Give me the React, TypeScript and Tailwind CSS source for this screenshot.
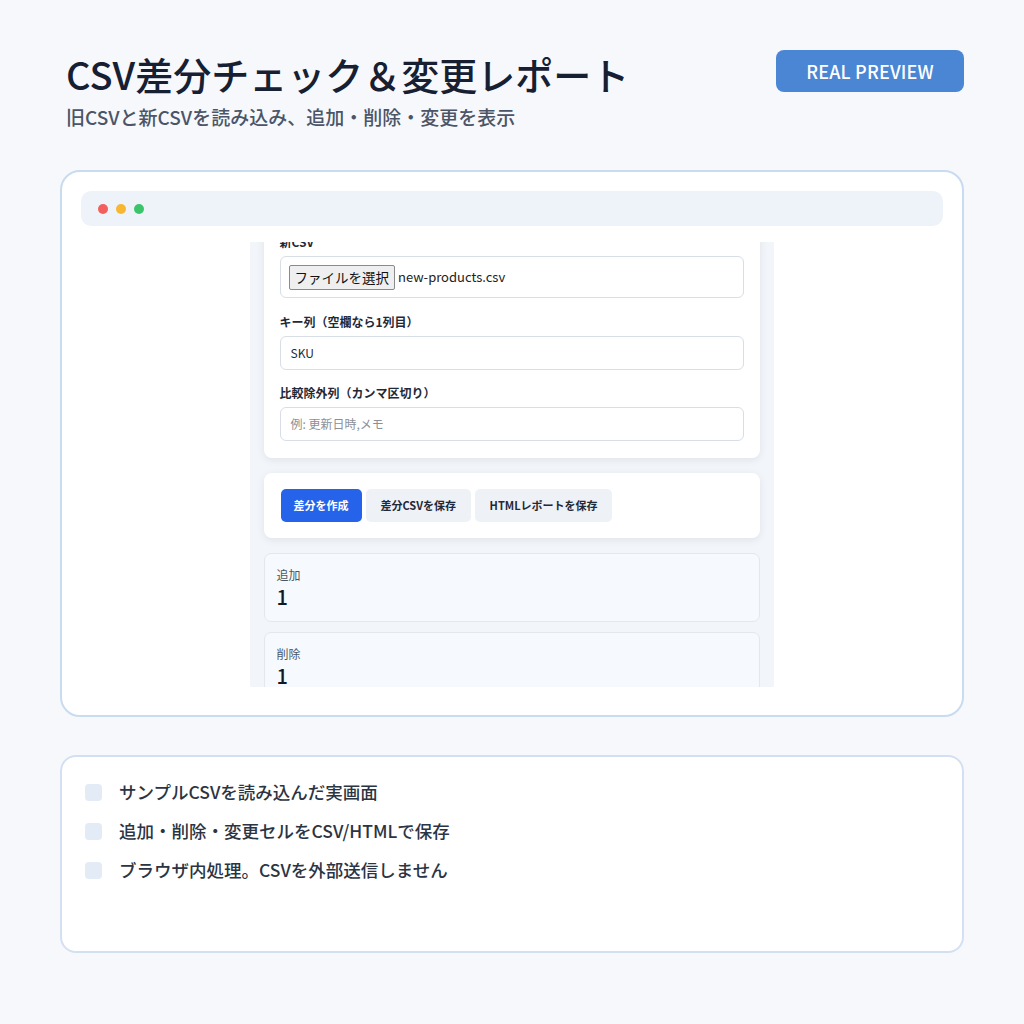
import React from "react";

const jp = { fontFamily: '"Noto Sans CJK JP", "Noto Sans", sans-serif' };

function Field({ label, children }: { label: string; children: React.ReactNode }) {
  return (
    <div className="flex flex-col">
      <div className="h-[18px] text-[12px] leading-[18px] font-bold text-[#1f2937] mb-[5px]">{label}</div>
      {children}
    </div>
  );
}

function Stat({ label, value }: { label: string; value: string }) {
  return (
    <div className="h-[69px] rounded-[7px] border border-[#e3e8ef] bg-[#f6f9fd] px-[12px] pt-[13px] shrink-0">
      <div className="text-[12px] leading-[16px] text-[#4b5563]">{label}</div>
      <div className="text-[20px] leading-[24px] font-medium text-[#111827] mt-[2px]">{value}</div>
    </div>
  );
}

export default function App() {
  const dots = ["bg-[#f25f5c]", "bg-[#f7b731]", "bg-[#3cc46b]"];
  return (
    <div className="w-[1024px] h-[1024px] bg-[#f6f8fc] px-[60px] pt-[48px]" style={jp}>
      {/* header */}
      <div className="flex items-start justify-between">
        <div className="pl-[6px]">
          <h1 className="text-[38px] leading-[52px] font-medium text-[#162032] tracking-[0px]">
            CSV差分チェック＆変更レポート
          </h1>
          <p className="text-[19px] leading-[26px] font-medium text-[#4b5567] mt-[4px]">
            旧CSVと新CSVを読み込み、追加・削除・変更を表示
          </p>
        </div>
        <div className="mt-[2px] w-[188px] h-[42px] rounded-[8px] bg-[#4a86d4] flex items-center justify-center text-white text-[18px] font-medium tracking-[0.2px]">
          REAL PREVIEW
        </div>
      </div>

      {/* preview window */}
      <div className="mt-[40px] h-[547px] rounded-[20px] border-2 border-[#c9dbf0] bg-white px-[19px] pt-[19px]">
        <div className="h-[35px] rounded-[10px] bg-[#eef3fa] flex items-center gap-[8px] px-[17px]">
          {dots.map((c) => (
            <span key={c} className={`w-[10px] h-[10px] rounded-full ${c}`} />
          ))}
        </div>
        <div className="flex justify-center mt-[16px] pr-[1px]">
          <div className="w-[524px] h-[445px] overflow-hidden bg-[#f2f5f9] px-[14px]">
            <div className="-mt-[9px] flex flex-col gap-[15px]">
              {/* form card */}
              <div className="rounded-b-[8px] bg-white shadow-[0_2px_8px_rgba(15,23,42,0.08)] px-[16px] pb-[17px]">
                <Field label="新CSV">
                  <div className="h-[42px] rounded-[6px] border border-[#d8dee6] flex items-center px-[8px]">
                    <span className="h-[25px] px-[5px] border border-[#8a8a8a] rounded-[2px] bg-[#efefef] text-[13.5px] leading-[23px] text-[#111]">
                      ファイルを選択
                    </span>
                    <span className="ml-[3px] text-[13px] text-[#222]">new-products.csv</span>
                  </div>
                </Field>
                <div className="mt-[15px]">
                  <Field label="キー列（空欄なら1列目）">
                    <div className="h-[34px] rounded-[6px] border border-[#d8dee6] flex items-center px-[10px] text-[12px] text-[#1f2937]">
                      SKU
                    </div>
                  </Field>
                </div>
                <div className="mt-[14px]">
                  <Field label="比較除外列（カンマ区切り）">
                    <div className="h-[34px] rounded-[6px] border border-[#d8dee6] flex items-center px-[10px] text-[12px] text-[#8b8f96]">
                      例: 更新日時,メモ
                    </div>
                  </Field>
                </div>
              </div>

              {/* action card */}
              <div className="h-[65px] rounded-[8px] bg-white shadow-[0_2px_8px_rgba(15,23,42,0.08)] px-[17px] flex items-center gap-[4px] shrink-0">
                <div className="h-[33px] px-[13px] rounded-[5px] bg-[#2563eb] text-white text-[11px] font-bold flex items-center">
                  差分を作成
                </div>
                <div className="h-[33px] px-[15px] rounded-[5px] bg-[#eef2f7] text-[#1f2937] text-[11px] font-bold flex items-center">
                  差分CSVを保存
                </div>
                <div className="h-[33px] px-[14.5px] rounded-[5px] bg-[#eef2f7] text-[#1f2937] text-[11px] font-bold flex items-center">
                  HTMLレポートを保存
                </div>
              </div>

              <div className="flex flex-col gap-[10px]">
                <Stat label="追加" value="1" />
                <Stat label="削除" value="1" />
              </div>
            </div>
          </div>
        </div>
      </div>

      {/* notes */}
      <div className="mt-[38px] h-[198px] rounded-[16px] border-2 border-[#d3e0f1] bg-white px-[23px] pt-[16px]">
        {[
          "サンプルCSVを読み込んだ実画面",
          "追加・削除・変更セルをCSV/HTMLで保存",
          "ブラウザ内処理。CSVを外部送信しません",
        ].map((t) => (
          <div key={t} className="flex items-center h-[39px]">
            <span className="w-[17px] h-[17px] rounded-[4px] bg-[#e3ebf6]" />
            <span className="ml-[17px] text-[17.5px] font-medium text-[#2b3443]">{t}</span>
          </div>
        ))}
      </div>
    </div>
  );
}
